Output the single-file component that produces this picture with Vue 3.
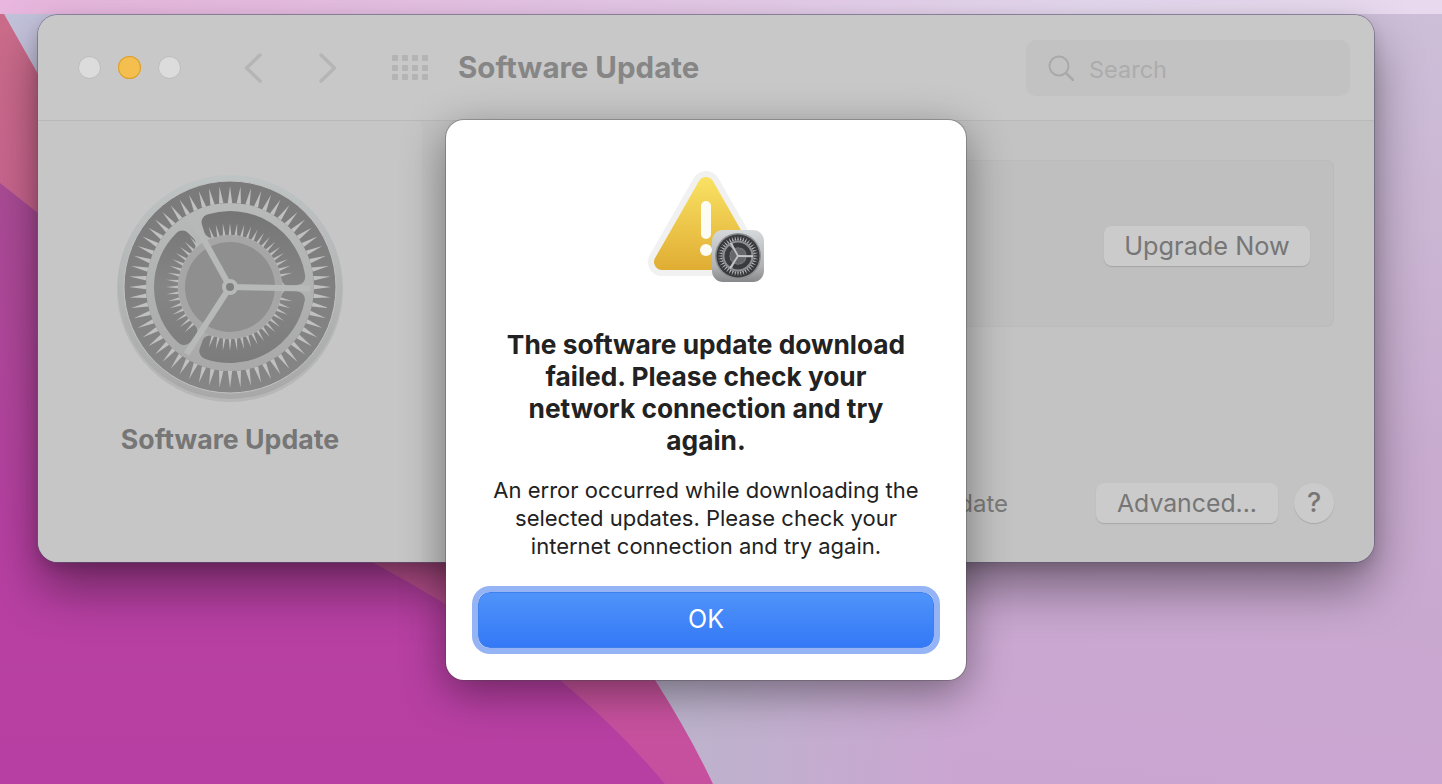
<script setup>
const polar = (cx, cy, r, deg) => {
  const a = (deg * Math.PI) / 180
  return [+(cx + r * Math.cos(a)).toFixed(2), +(cy + r * Math.sin(a)).toFixed(2)]
}
const teeth = (cx, cy, n, r0, r1, half, skip = () => false) => {
  const out = []
  for (let i = 0; i < n; i++) {
    const a = (360 / n) * i
    if (skip(((a + 180) % 360) - 180)) continue
    const p = [polar(cx, cy, r0, a - half), polar(cx, cy, r1, a), polar(cx, cy, r0, a + half)]
    out.push(p.map((q) => q.join(',')).join(' '))
  }
  return out
}
const sector = (cx, cy, r1, r2, a1, a2) => {
  const large = a2 - a1 > 180 ? 1 : 0
  const A = polar(cx, cy, r2, a1), B = polar(cx, cy, r2, a2), C = polar(cx, cy, r1, a2), D = polar(cx, cy, r1, a1)
  return `M${A} A${r2} ${r2} 0 ${large} 1 ${B} L${C} A${r1} ${r1} 0 ${large} 0 ${D} Z`
}
const spokeAngles = [1, -119, 123]
const nearSpoke = (a) =>
  spokeAngles.some((s) => {
    const d = Math.abs(((a - s + 540) % 360) - 180)
    return d < 8
  })
const windows = [[-111, -5], [129, 229], [7, 113]]

const bigTeeth = teeth(120, 120, 60, 84, 101, 1.5)
const bigInner = teeth(120, 120, 56, 51, 64, 1.6, nearSpoke)
const bigWindows = windows.map(([a, b]) => sector(120, 120, 60, 68, a + 3.5, b - 3.5))
const bigSpokes = spokeAngles.map((a) => polar(120, 120, 80, a))

const smallTeeth = teeth(738, 256, 40, 15.5, 20.5, 3.2)
const smallWindows = windows.map(([a, b]) => sector(738, 256, 9, 13, a, b))
const smallSpokes = spokeAngles.map((a) => polar(738, 256, 15, a))
const gridDots = Array.from({ length: 12 }, (_, i) => i)
</script>

<template>
  <div class="desktop">
    <svg class="wallpaper" viewBox="0 0 1442 784" preserveAspectRatio="none" aria-hidden="true">
      <defs>
        <linearGradient id="lilac" x1="0.9" y1="0" x2="0.7" y2="1">
          <stop offset="0" stop-color="#cdbfd8" />
          <stop offset="0.55" stop-color="#c8abcf" />
          <stop offset="1" stop-color="#cba5d2" />
        </linearGradient>
        <linearGradient id="greyLilac" gradientUnits="userSpaceOnUse" x1="660" y1="0" x2="960" y2="0">
          <stop offset="0" stop-color="#bcb4cc" />
          <stop offset="1" stop-color="#bcb4cc" stop-opacity="0" />
        </linearGradient>
        <linearGradient id="red" x1="0" y1="0" x2="0" y2="1">
          <stop offset="0" stop-color="#cb6c8a" />
          <stop offset="1" stop-color="#c64f9f" />
        </linearGradient>
        <linearGradient id="magenta" x1="0" y1="0" x2="0" y2="1">
          <stop offset="0" stop-color="#ab4c96" />
          <stop offset="0.6" stop-color="#b740a2" />
          <stop offset="1" stop-color="#b73fa3" />
        </linearGradient>
      </defs>
      <rect width="1442" height="784" fill="url(#lilac)" />
      <rect x="660" y="560" width="300" height="224" fill="url(#greyLilac)" />
      <path d="M0 0 L120 0 L120 200 L0 200 Z" fill="#c3c2db" />
      <path d="M0 14 H4 L38 74 L300 400 Q560 560 655 680 Q690 735 713 784 H0 Z" fill="url(#red)" />
      <path d="M0 183 L38 213 L200 430 L372 562 Q470 615 560 680 Q620 730 665 784 H0 Z" fill="url(#magenta)" />
    </svg>

    <header class="menubar"></header>

    <section class="window">
      <div class="titlebar">
        <div class="lights">
          <span class="light"></span>
          <span class="light light-min"></span>
          <span class="light"></span>
        </div>
        <svg class="chev chev-back" width="20" height="32" viewBox="0 0 20 32" aria-hidden="true">
          <path d="M17 3 L3.500 16 L17 29" />
        </svg>
        <svg class="chev chev-fwd" width="20" height="32" viewBox="0 0 20 32" aria-hidden="true">
          <path d="M3 3 L16.500 16 L3 29" />
        </svg>
        <div class="grid-icon">
          <span v-for="d in gridDots" :key="d" class="grid-dot"></span>
        </div>
        <h1 class="title">Software Update</h1>
        <div class="search">
          <svg width="26" height="26" viewBox="0 0 26 26" aria-hidden="true">
            <circle cx="11" cy="11" r="9.500" fill="none" stroke="#a9a9a9" stroke-width="2" />
            <path d="M18 18 L25 25" stroke="#a9a9a9" stroke-width="2.500" stroke-linecap="round" />
          </svg>
          <span class="search-label">Search</span>
        </div>
      </div>

      <div class="body">
        <aside class="sidebar">
          <svg class="gear" width="240" height="240" viewBox="0 0 240 240" aria-hidden="true">
            <defs>
              <linearGradient id="rim" x1="0" y1="0" x2="0" y2="1">
                <stop offset="0" stop-color="#bec3c3" />
                <stop offset="1" stop-color="#a8a8a8" />
              </linearGradient>
              <linearGradient id="ground" x1="0" y1="0" x2="0" y2="1">
                <stop offset="0" stop-color="#7a7a7a" />
                <stop offset="1" stop-color="#868686" />
              </linearGradient>
              <linearGradient id="wheel" x1="0" y1="0" x2="0" y2="1">
                <stop offset="0" stop-color="#b8baba" />
                <stop offset="1" stop-color="#a9a9a9" />
              </linearGradient>
              <linearGradient id="hole" gradientUnits="userSpaceOnUse" x1="0" y1="44" x2="0" y2="196">
                <stop offset="0" stop-color="#757575" />
                <stop offset="0.5" stop-color="#858585" />
                <stop offset="1" stop-color="#7c7c7c" />
              </linearGradient>
            </defs>
            <circle cx="120" cy="122" r="113" fill="#b7b7b7" />
            <circle cx="120" cy="120" r="112" fill="url(#rim)" />
            <circle cx="120" cy="120" r="106" fill="url(#ground)" stroke="#c2c2c2" stroke-width="1" />
            <polygon v-for="(t, i) in bigTeeth" :key="'o' + i" :points="t" fill="#c0c0c0" />
            <circle cx="120" cy="120" r="84" fill="url(#wheel)" />
            <path v-for="(w, i) in bigWindows" :key="'w' + i" :d="w" fill="url(#hole)" stroke="url(#hole)" stroke-width="16" stroke-linejoin="round" />
            <polygon v-for="(t, i) in bigInner" :key="'n' + i" :points="t" fill="#bdbdbd" />
            <circle cx="120" cy="120" r="52" fill="#a6a6a6" />
            <circle cx="120" cy="120" r="45" fill="#8f8f8f" />
            <line v-for="(s, i) in bigSpokes" :key="'s' + i" x1="120" y1="120" :x2="s[0]" :y2="s[1]" stroke="#b7b9b9" stroke-width="6" />
            <circle cx="120" cy="120" r="8" fill="#b7b9b9" />
            <circle cx="120" cy="120" r="4" fill="#808080" />
          </svg>
          <div class="sidebar-label">Software Update</div>
        </aside>

        <main class="main">
          <div class="panel">
            <button class="btn btn-upgrade" type="button">Upgrade Now</button>
          </div>
          <div class="actions">
            <span class="auto">Automatically keep my Mac up to date</span>
            <button class="btn btn-advanced" type="button">Advanced...</button>
            <button class="btn btn-help" type="button">?</button>
          </div>
        </main>
      </div>
    </section>

    <div class="sheet">
      <svg class="alert-icon" width="130" height="122" viewBox="640 165 130 122" aria-hidden="true">
        <defs>
          <linearGradient id="amber" gradientUnits="userSpaceOnUse" x1="0" y1="177" x2="0" y2="270">
            <stop offset="0" stop-color="#f9e264" />
            <stop offset="1" stop-color="#e0ad33" />
          </linearGradient>
          <linearGradient id="tile" x1="0" y1="0" x2="0" y2="1">
            <stop offset="0" stop-color="#d5d9dc" />
            <stop offset="0.7" stop-color="#b0b2b4" />
            <stop offset="1" stop-color="#86888a" />
          </linearGradient>
        </defs>
        <path d="M706 185 L662 262 H750 Z" fill="#f1f1f1" stroke="#f1f1f1" stroke-width="28" stroke-linejoin="round" />
        <path d="M706 185 L662 262 H750 Z" fill="url(#amber)" stroke="url(#amber)" stroke-width="16" stroke-linejoin="round" />
        <rect x="701" y="201" width="10" height="38" rx="5" fill="#fdfcf4" />
        <circle cx="706" cy="250" r="6" fill="#fdfcf4" />
        <rect x="712" y="230" width="52" height="52" rx="11" fill="url(#tile)" />
        <circle cx="738" cy="256" r="23" fill="#8b8d8f" />
        <circle cx="738" cy="256" r="21.500" fill="#37383b" />
        <polygon v-for="(t, i) in smallTeeth" :key="'t' + i" :points="t" fill="#b5b6b8" />
        <circle cx="738" cy="256" r="15.500" fill="#8e8f92" />
        <path v-for="(w, i) in smallWindows" :key="'w' + i" :d="w" fill="#3a3b3e" stroke="#3a3b3e" stroke-linejoin="round" />
        <circle cx="738" cy="256" r="8" fill="#66676a" />
        <line v-for="(s, i) in smallSpokes" :key="'s' + i" x1="738" y1="256" :x2="s[0]" :y2="s[1]" stroke="#c4c5c7" stroke-width="1.800" />
      </svg>
      <h2 class="sheet-title">The software update download<br />failed. Please check your<br />network connection and try<br />again.</h2>
      <p class="sheet-text">An error occurred while downloading the<br />selected updates. Please check your<br />internet connection and try again.</p>
      <button class="ok" type="button">OK</button>
    </div>
  </div>
</template>

<style>
html, body { margin: 0; background: #c9acd0; overflow: hidden; }
</style>

<style scoped>
.desktop {
  position: relative;
  width: 1442px;
  height: 784px;
  overflow: hidden;
  font-family: Inter, "Liberation Sans", sans-serif;
}
.wallpaper {
  position: absolute;
  inset: 0;
  width: 1442px;
  height: 784px;
}
.menubar {
  position: relative;
  height: 14px;
  background: linear-gradient(90deg, #e8b6de 0%, #e4c6e6 45%, #e4d8ee 75%, #e8d9ee 100%);
}
.window {
  position: relative;
  display: flex;
  flex-direction: column;
  width: 1336px;
  height: 547px;
  margin: 1px 0 0 38px;
  border-radius: 20px;
  overflow: clip;
  background: #c3c3c3;
  box-shadow: 0 0 0 1px rgba(95, 90, 120, 0.55), 0 5px 14px rgba(0, 0, 0, 0.14), 0 26px 50px rgba(0, 0, 0, 0.42);
}
.titlebar {
  display: flex;
  align-items: center;
  flex: none;
  height: 105px;
  padding: 0 24px 0 40px;
  background: #c8c8c8;
  border-bottom: 1px solid #b9b9b9;
}
.lights { display: flex; gap: 17px; }
.light {
  width: 23px;
  height: 23px;
  border-radius: 50%;
  background: #dcdcdd;
  box-shadow: inset 0 0 0 1px #bdbdbd;
}
.light-min { background: #f5bf50; box-shadow: inset 0 0 0 1px #d9a030; }
.chev path {
  fill: none;
  stroke: #b5b5b5;
  stroke-width: 3.500;
  stroke-linecap: round;
  stroke-linejoin: round;
}
.chev-back { margin-left: 62px; }
.chev-fwd { margin-left: 55px; }
.grid-icon {
  display: grid;
  grid-template-columns: repeat(4, 6px);
  grid-auto-rows: 6px;
  gap: 3.500px 4px;
  margin-left: 54px;
}
.grid-dot { background: #b4b4b4; border-radius: 1px; }
.title {
  margin: 0 0 2px 30px;
  font-size: 29.500px;
  font-weight: 700;
  color: #868686;
}
.search {
  display: flex;
  align-items: center;
  gap: 15px;
  width: 324px;
  height: 56px;
  margin-left: auto;
  padding-left: 22px;
  box-sizing: border-box;
  border-radius: 10px;
  background: #c2c2c3;
}
.search-label {
  font-size: 23.500px;
  color: #acacac;
  padding-top: 3px;
}
.body { display: flex; flex: 1; min-height: 0; }
.sidebar {
  display: flex;
  flex-direction: column;
  align-items: center;
  flex: none;
  width: 384px;
  padding-top: 46px;
  box-sizing: border-box;
  background: #c6c6c6;
}
.sidebar-label {
  margin-top: 16px;
  font-size: 26.700px;
  font-weight: 700;
  color: #767676;
}
.main {
  display: flex;
  flex-direction: column;
  flex: 1;
  padding: 39px 40px 0 24px;
  background: #c3c3c3;
}
.panel {
  display: flex;
  align-items: center;
  justify-content: flex-end;
  height: 167px;
  padding: 5px 24px 0 0;
  box-sizing: border-box;
  border-radius: 8px;
  background: #bfbfbf;
  box-shadow: inset 0 0 0 1px #bbbbbb;
}
.btn {
  height: 40px;
  border: 0;
  border-radius: 8px;
  background: #cbcbcb;
  box-shadow: 0 1px 1px rgba(0, 0, 0, 0.14);
  font-family: inherit;
  color: #767676;
  padding: 0 0 1px;
}
.btn-upgrade { width: 206px; font-size: 25.300px; }
.actions {
  display: flex;
  align-items: center;
  margin-top: 156px;
}
.auto {
  margin-left: auto;
  margin-right: 88px;
  font-size: 24px;
  color: #7a7a7a;
  white-space: nowrap;
}
.btn-advanced { width: 182px; font-size: 24.800px; }
.btn-help {
  width: 40px;
  margin-left: 16px;
  border-radius: 50%;
  font-size: 27px;
  font-weight: 500;
}
.sheet {
  position: absolute;
  left: 446px;
  top: 120px;
  display: flex;
  flex-direction: column;
  align-items: center;
  width: 520px;
  height: 560px;
  box-sizing: border-box;
  padding-top: 45px;
  border-radius: 18px;
  background: #fff;
  box-shadow: 0 0 0 1px rgba(70, 70, 70, 0.35), 0 12px 44px rgba(0, 0, 0, 0.42);
  color: #222;
  text-align: center;
}
.alert-icon { margin: 0 0 0 -2px; display: block; }
.sheet-title {
  margin: 42px 0 0;
  font-size: 26.300px;
  line-height: 32px;
  font-weight: 700;
}
.sheet-text {
  margin: 19px 0 0;
  font-size: 22px;
  line-height: 28px;
  font-weight: 400;
}
.ok {
  width: 456px;
  height: 56px;
  margin-top: 32px;
  padding: 0 0 2px;
  border: 1px solid #3f7fee;
  border-radius: 12px;
  background: linear-gradient(180deg, #4f93fa 0%, #3478f6 100%);
  box-shadow: 0 0 0 6px #94b4f5;
  color: #fff;
  font-family: inherit;
  font-size: 25px;
  font-weight: 400;
}
</style>
